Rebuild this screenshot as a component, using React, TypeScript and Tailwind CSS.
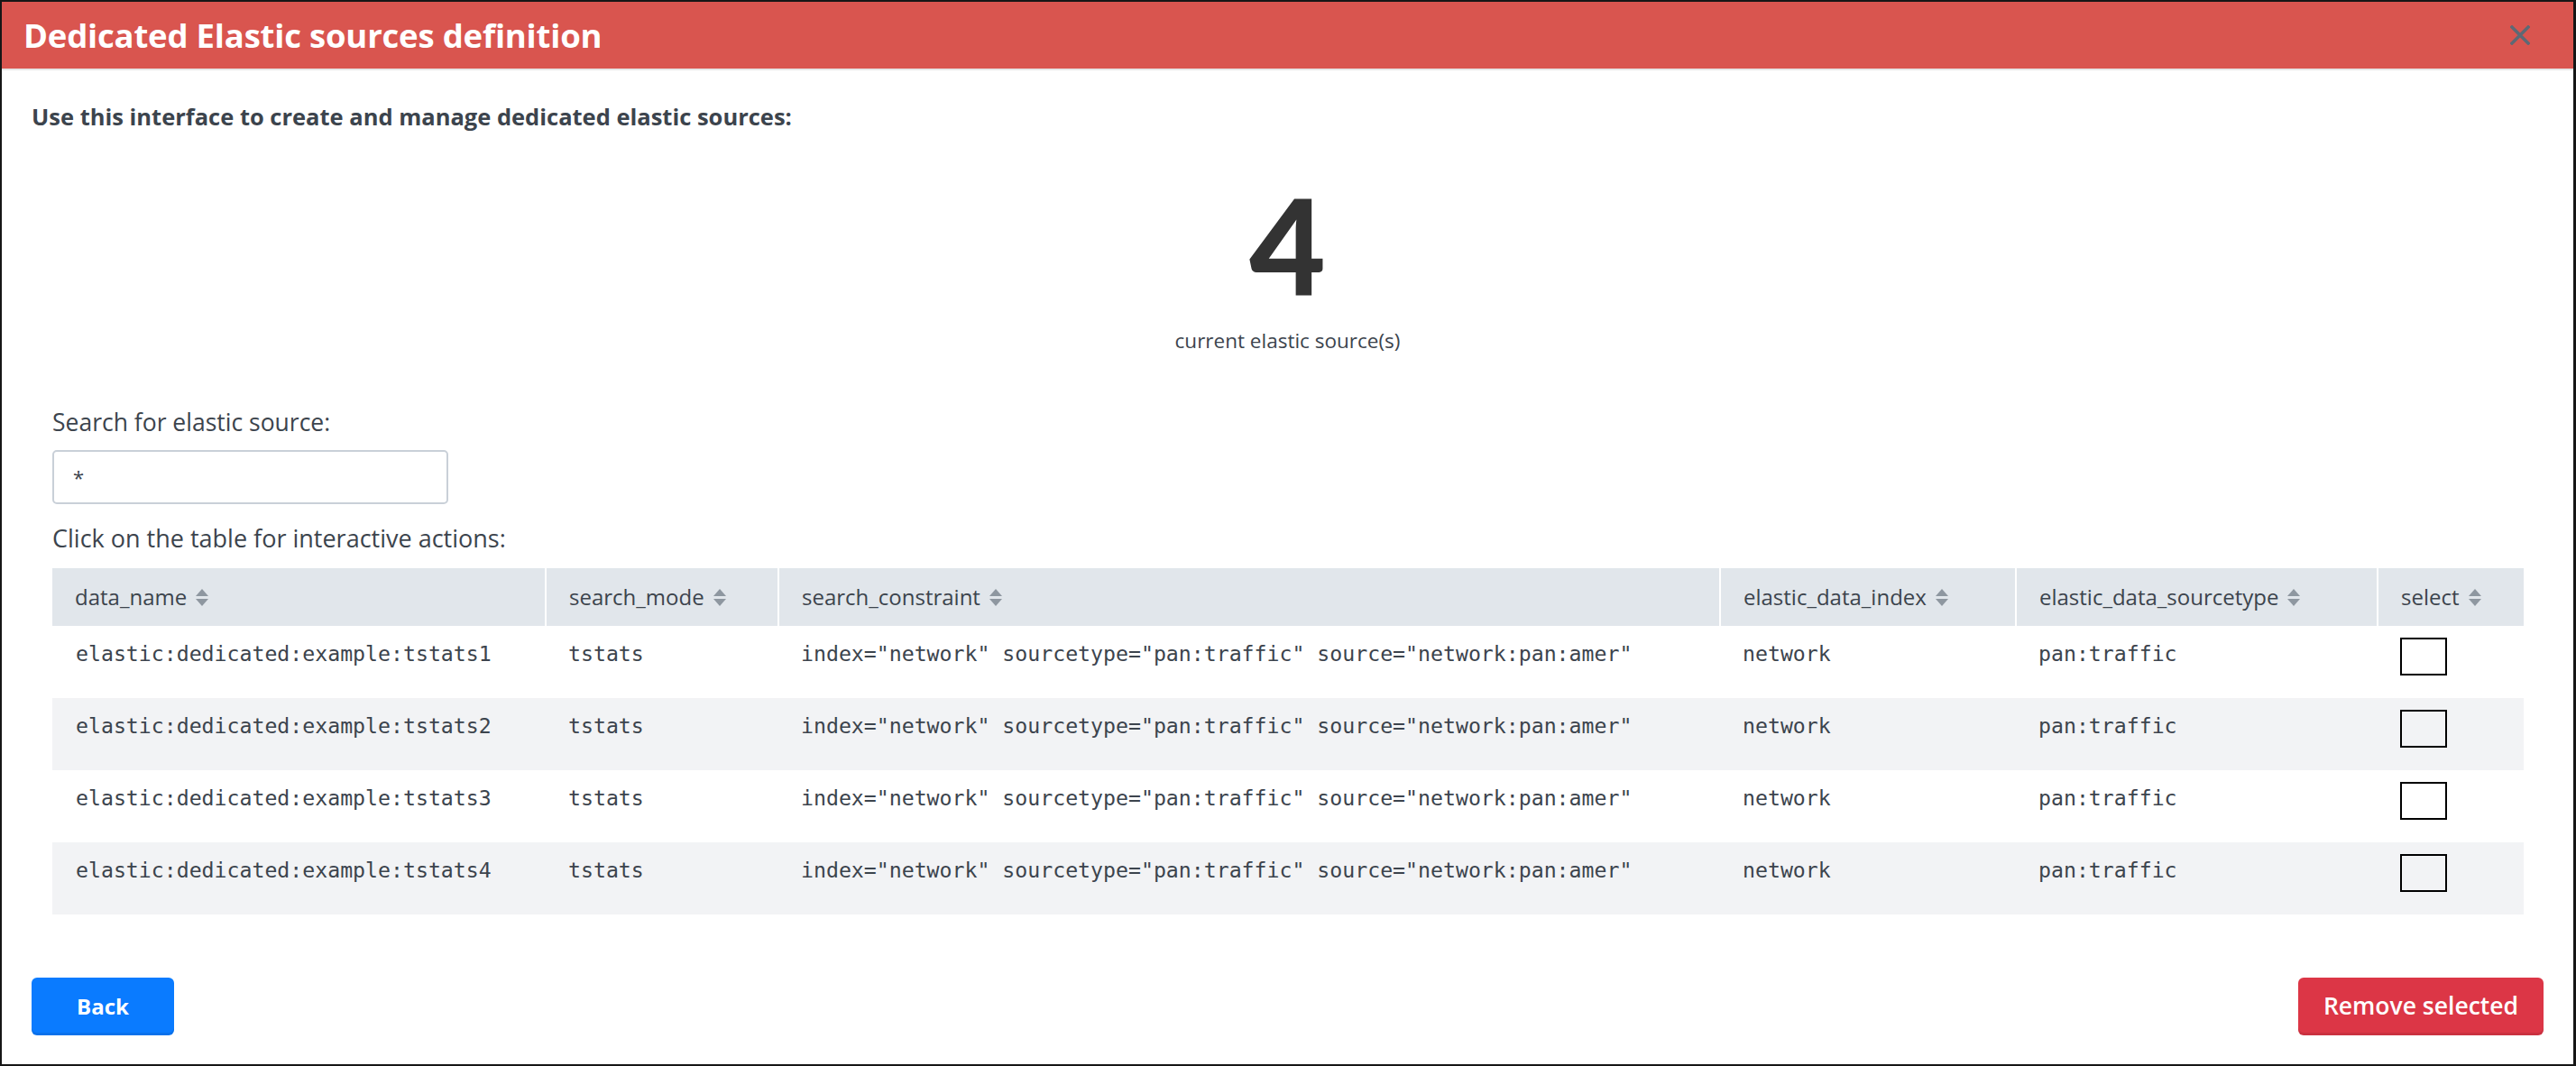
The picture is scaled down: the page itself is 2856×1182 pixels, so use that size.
import React from 'react';

const rows = [1, 2, 3, 4].map((n) => ({
  dataName: `elastic:dedicated:example:tstats${n}`,
  searchMode: 'tstats',
  constraint: 'index="network" sourcetype="pan:traffic" source="network:pan:amer"',
  index: 'network',
  sourcetype: 'pan:traffic',
}));

const columns = [
  { label: 'data_name', width: 'w-[547px]' },
  { label: 'search_mode', width: 'w-[258px]' },
  { label: 'search_constraint', width: 'w-[1044px]' },
  { label: 'elastic_data_index', width: 'w-[328px]' },
  { label: 'elastic_data_sourcetype', width: 'w-[401px]' },
  { label: 'select', width: 'w-[162px]' },
];

function SortIcon() {
  return (
    <svg width="14" height="19" viewBox="0 0 14 19" className="ml-[10px] inline-block shrink-0">
      <polygon points="7,0 14,8 0,8" fill="#8e97a0" />
      <polygon points="0,11 14,11 7,19" fill="#8e97a0" />
    </svg>
  );
}

function CloseIcon() {
  return (
    <svg width="22" height="22" viewBox="0 0 22 22">
      <path d="M2 2 L20 20 M20 2 L2 20" stroke="#5d6975" strokeWidth="3.5" strokeLinecap="square" />
    </svg>
  );
}

export default function App() {
  return (
    <div
      className="w-[2856px] h-[1182px] box-border border-2 border-r-[3px] border-[#161616] bg-white flex flex-col text-[#3c444d]"
      style={{ fontFamily: '"Open Sans", Lato, sans-serif' }}
    >
      <div className="h-[76px] shrink-0 bg-[#d9554f] border-b-2 border-[#e6e6e6] flex items-center justify-between pl-[24px] pr-[48px]">
        <h1 className="text-[36.5px] font-bold text-white leading-none tracking-[-0.2px]">Dedicated Elastic sources definition</h1>
        <CloseIcon />
      </div>

      <div className="flex-1 flex flex-col px-[33px]">
        <p className="mt-[35px] text-[25.5px] leading-[32px] font-bold text-[#3c444d]">
          Use this interface to create and manage dedicated elastic sources:
        </p>

        <div
          className="mt-[53px] text-center text-[146px] leading-none font-black text-[#333333]"
          style={{ fontFamily: 'Lato, sans-serif' }}
        >
          4
        </div>
        <div className="mt-[20px] text-center text-[22.5px] leading-[28px]">current elastic source(s)</div>

        <div className="mx-[23px] flex flex-col">
          <label className="mt-[60px] text-[26.5px] leading-[32px]">Search for elastic source:</label>
          <div className="mt-[15px] w-[439px] h-[60px] rounded-[5px] border-2 border-[#c9d0d8] flex items-center px-[21px] text-[22px]">
            *
          </div>
          <p className="mt-[22px] text-[27px] leading-[32px]">Click on the table for interactive actions:</p>

          <table className="mt-[17px] w-[2740px] border-collapse table-fixed">
            <thead>
              <tr className="h-[64px] bg-[#e1e6eb]">
                {columns.map((c, i) => (
                  <th
                    key={c.label}
                    className={`${c.width} p-0 pl-[25px] text-left font-normal text-[24px] ${i > 0 ? 'border-l-2 border-white' : ''}`}
                  >
                    <span className="inline-flex items-center">
                      {c.label}
                      <SortIcon />
                    </span>
                  </th>
                ))}
              </tr>
            </thead>
            <tbody style={{ fontFamily: '"DejaVu Sans Mono", "Liberation Mono", monospace' }}>
              {rows.map((r, i) => (
                <tr key={r.dataName} className={`h-[80px] align-top text-[23.2px] ${i % 2 === 1 ? 'bg-[#f2f3f5]' : 'bg-white'}`}>
                  <td className="pl-[26px] pt-[17px] leading-[28px]">{r.dataName}</td>
                  <td className="pl-[25px] pt-[17px] leading-[28px]">{r.searchMode}</td>
                  <td className="pl-[25px] pt-[17px] leading-[28px] whitespace-pre">{r.constraint}</td>
                  <td className="pl-[25px] pt-[17px] leading-[28px]">{r.index}</td>
                  <td className="pl-[25px] pt-[17px] leading-[28px]">{r.sourcetype}</td>
                  <td className="pl-[25px] pt-[13px]">
                    <div className="w-[52px] h-[42px] border-2 border-black" />
                  </td>
                </tr>
              ))}
            </tbody>
          </table>
        </div>

        <div className="mt-[70px] flex justify-between">
          <button className="w-[158px] h-[64px] rounded-[6px] bg-[#0a7bff] shadow-[inset_0_-3px_0_rgba(0,0,0,0.08)] text-white text-[24px] font-bold">
            Back
          </button>
          <button className="w-[272px] h-[64px] rounded-[6px] bg-[#dc3646] shadow-[inset_0_-3px_0_rgba(0,0,0,0.08)] text-white text-[26.5px] font-semibold">
            Remove selected
          </button>
        </div>
      </div>
    </div>
  );
}
